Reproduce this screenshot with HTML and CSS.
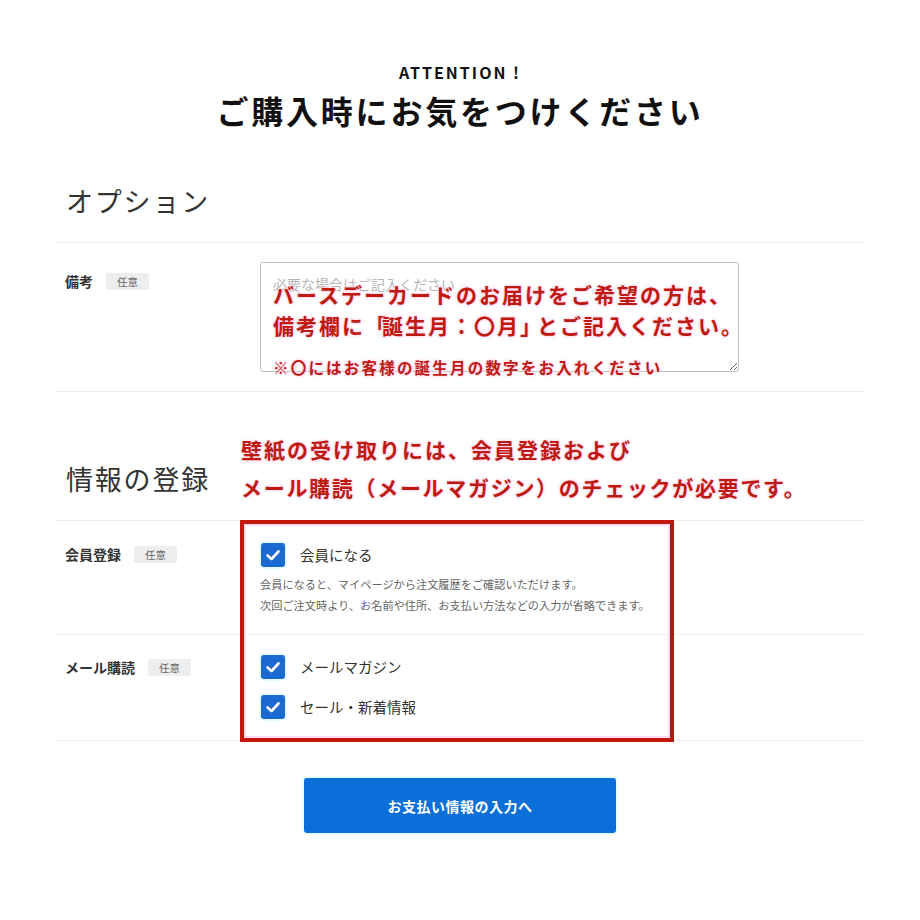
FILE: index.html
```html
<!DOCTYPE html>
<html lang="ja">
<head>
<meta charset="utf-8">
<title>ご購入時にお気をつけください</title>
<link rel="stylesheet" href="styles.css">
</head>
<body>
<main class="page">
  <header class="intro">
    <p class="eyebrow">ATTENTION !</p>
    <h1 class="title">ご購入時にお気をつけください</h1>
  </header>

  <section class="group group-option">
    <h2 class="group-title">オプション</h2>
    <div class="row row-note">
      <div class="label">備考 <span class="badge">任意</span></div>
      <div class="field">
        <textarea class="textarea" placeholder="必要な場合はご記入ください"></textarea>
        <div class="annot annot-note">
          <p class="annot-big line-a">バースデーカードのお届けをご希望の方は、</p>
          <p class="annot-big line-b">備考欄に<span class="br">「</span>誕生月：〇月<span class="br">」</span>とご記入ください。</p>
          <p class="annot-small">※〇にはお客様の誕生月の数字をお入れください</p>
        </div>
      </div>
    </div>
  </section>

  <section class="group group-register">
    <h2 class="group-title title-register">情報の登録</h2>
    <div class="row row-member">
      <div class="label">会員登録 <span class="badge">任意</span></div>
      <div class="field">
        <label class="check">
          <span class="box"><svg viewBox="0 0 24 24" width="24" height="24"><polyline points="6.5,12.5 10.5,16 17.5,8.5" fill="none" stroke="#fff" stroke-width="2.6" stroke-linecap="round" stroke-linejoin="round"/></svg></span>
          <span class="check-text">会員になる</span>
        </label>
        <p class="desc">会員になると、マイページから注文履歴をご確認いただけます。<br>次回ご注文時より、お名前や住所、お支払い方法などの入力が省略できます。</p>
      </div>
    </div>
    <div class="row row-mail">
      <div class="label">メール購読 <span class="badge">任意</span></div>
      <div class="field checks">
        <label class="check">
          <span class="box"><svg viewBox="0 0 24 24" width="24" height="24"><polyline points="6.5,12.5 10.5,16 17.5,8.5" fill="none" stroke="#fff" stroke-width="2.6" stroke-linecap="round" stroke-linejoin="round"/></svg></span>
          <span class="check-text">メールマガジン</span>
        </label>
        <label class="check">
          <span class="box"><svg viewBox="0 0 24 24" width="24" height="24"><polyline points="6.5,12.5 10.5,16 17.5,8.5" fill="none" stroke="#fff" stroke-width="2.6" stroke-linecap="round" stroke-linejoin="round"/></svg></span>
          <span class="check-text">セール・新着情報</span>
        </label>
      </div>
    </div>
    <div class="annot annot-register">
      <p class="annot-big2 line-c">壁紙の受け取りには、会員登録および</p>
      <p class="annot-big2 line-d">メール購読（メールマガジン）のチェックが必要です。</p>
    </div>
    <div class="highlight-box"></div>
  </section>

  <div class="actions">
    <button class="submit" type="button">お支払い情報の入力へ</button>
  </div>
</main>
</body>
</html>
```

FILE: styles.css
```css
* { box-sizing: border-box; }

html, body {
  margin: 0;
  padding: 0;
  background: #fff;
}

body {
  font-family: "Noto Sans CJK JP", "Noto Sans", sans-serif;
  color: #222;
}

p { margin: 0; }

.page {
  width: 808px;
  margin: 0 auto;
  padding-bottom: 80px;
}

.intro {
  text-align: center;
  padding-top: 62px;
}

.eyebrow {
  font-size: 16px;
  line-height: 20px;
  font-weight: 700;
  letter-spacing: 2px;
  color: #111;
}

.title {
  margin: 6px 0 0;
  font-size: 32px;
  line-height: 44px;
  font-weight: 700;
  letter-spacing: 2.8px;
  color: #111;
}

.group {
  position: relative;
}

.group-title {
  margin: 0;
  padding: 49px 0 21px 10px;
  font-size: 27px;
  line-height: 40px;
  font-weight: 400;
  letter-spacing: 1.8px;
  color: #333;
  border-bottom: 1px solid #eeeeee;
}

.title-register {
  padding-top: 67px;
}

.row {
  display: grid;
  grid-template-columns: 204px 1fr;
  border-bottom: 1px solid #eeeeee;
}

.label {
  display: flex;
  align-items: center;
  gap: 13px;
  padding-left: 9px;
  font-size: 14px;
  line-height: 20px;
  font-weight: 700;
  color: #333;
  align-self: start;
}

.badge {
  display: inline-block;
  font-size: 10.5px;
  line-height: 17px;
  font-weight: 400;
  color: #666;
  background: #eeeeee;
  border-radius: 2px;
  padding: 0 11px;
}

.row-note {
  padding: 19px 0 19px;
}
.row-note .label { padding-top: 9px; }

.field {
  position: relative;
}

.textarea {
  display: block;
  width: 479px;
  height: 110px;
  border: 1px solid #bdbdbd;
  border-radius: 3px;
  padding: 12px 12px;
  font-family: "Noto Sans CJK JP", sans-serif;
  font-size: 14px;
  line-height: 18px;
  color: #333;
}
.textarea::placeholder { color: #b5b5b5; }

.annot {
  position: absolute;
  font-family: "Noto Sans CJK JP", sans-serif;
  font-weight: 700;
  color: #bf1a10;
  text-shadow: 0 0 2px #ffd6ef, 0 0 3px #ffd6ef, 0 0 4px #ffdcf2;
  pointer-events: none;
  white-space: nowrap;
}

.annot-note {
  left: 13px;
  top: 17px;
}

.annot-big {
  font-size: 21px;
  line-height: 31px;
}

.line-a { letter-spacing: 2px; }
.line-b { letter-spacing: 2px; }
.line-b .br { letter-spacing: -4px; }

.annot-small {
  margin-top: 15px;
  font-size: 15.5px;
  line-height: 22px;
  letter-spacing: 2.2px;
}

.annot-register {
  left: 185px;
  top: 38px;
}

.annot-big2 {
  font-size: 21px;
  line-height: 38px;
}

.line-c { letter-spacing: 2px; }
.line-d { letter-spacing: 1.7px; }

.row-member {
  padding: 22px 0 18px;
}
.row-member .label { padding-top: 1px; }

.check {
  display: flex;
  align-items: center;
  gap: 15px;
  padding-left: 1px;
}

.box {
  width: 24px;
  height: 24px;
  border-radius: 3px;
  background: #1b6ad2;
  display: block;
  box-shadow: 0 0 0 2px #e6fbff;
}
.box svg { display: block; }

.check-text {
  font-size: 14.5px;
  line-height: 24px;
  color: #333;
}

.desc {
  margin-top: 7px;
  font-size: 11.2px;
  line-height: 21px;
  color: #666;
}

.row-mail {
  padding: 20px 0 21px;
}
.row-mail .label { padding-top: 1px; margin-top: 1px; }

.checks {
  display: flex;
  flex-direction: column;
  gap: 16px;
}

.highlight-box {
  position: absolute;
  left: 184px;
  top: 128px;
  width: 434px;
  height: 222px;
  border: 4px solid #c4170e;
  border-right-color: #a3200e;
  box-shadow: inset 0 0 0 2px #ffd9f4;
  pointer-events: none;
}

.actions {
  display: flex;
  justify-content: center;
  padding-top: 37px;
}

.submit {
  width: 312px;
  height: 55px;
  border: none;
  border-radius: 3px;
  background: #0a6fd8;
  color: #fff;
  font-family: "Noto Sans CJK JP", sans-serif;
  font-size: 14px;
  font-weight: 700;
  letter-spacing: 0.5px;
  box-shadow: 0 0 0 2px #e8fcff;
}
```
